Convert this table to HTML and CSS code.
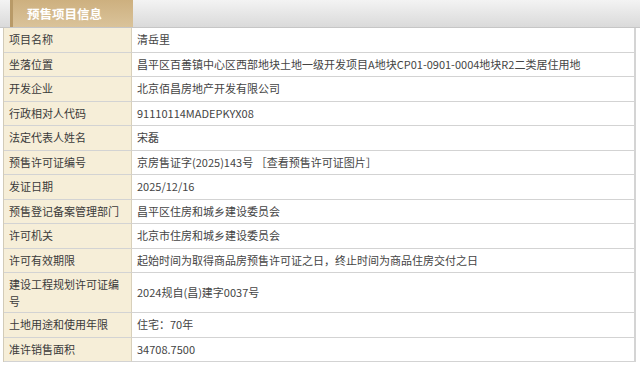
FILE: index.html
```html
<!DOCTYPE html>
<html lang="zh-CN">
<head>
<meta charset="utf-8">
<link rel="stylesheet" href="styles.css">
</head>
<body>
<div class="panel">
  <div class="tabbar">
    <div class="tab">预售项目信息</div>
  </div>
  <div class="info">
    <div class="label">项目名称</div><div class="value">清岳里</div>
    <div class="label">坐落位置</div><div class="value">昌平区百善镇中心区西部地块土地一级开发项目A地块CP01-0901-0004地块R2二类居住用地</div>
    <div class="label">开发企业</div><div class="value">北京佰昌房地产开发有限公司</div>
    <div class="label">行政相对人代码</div><div class="value">91110114MADEPKYX08</div>
    <div class="label">法定代表人姓名</div><div class="value">宋磊</div>
    <div class="label">预售许可证编号</div><div class="value">京房售证字(2025)143号 ［查看预售许可证图片］</div>
    <div class="label">发证日期</div><div class="value">2025/12/16</div>
    <div class="label">预售登记备案管理部门</div><div class="value">昌平区住房和城乡建设委员会</div>
    <div class="label">许可机关</div><div class="value">北京市住房和城乡建设委员会</div>
    <div class="label">许可有效期限</div><div class="value">起始时间为取得商品房预售许可证之日，终止时间为商品住房交付之日</div>
    <div class="label tall">建设工程规划许可证编号</div><div class="value tall">2024规自(昌)建字0037号</div>
    <div class="label">土地用途和使用年限</div><div class="value">住宅：70年</div>
    <div class="label">准许销售面积</div><div class="value">34708.7500</div>
  </div>
</div>
</body>
</html>
```

FILE: styles.css
```css
html, body {
  margin: 0;
  padding: 0;
  background: #ffffff;
}
body {
  font-family: "Noto Sans CJK SC", "Noto Sans", sans-serif;
  font-size: 11px;
  color: #3a3a3a;
  width: 640px;
  height: 365px;
  overflow: hidden;
}
.panel {
  width: 640px;
}
.tabbar {
  height: 27px;
  border-bottom: 1px solid #c6c6c6;
  background: linear-gradient(#f3f3f3, #dadada);
  display: flex;
  padding-left: 10px;
}
.tab {
  width: 123px;
  height: 27px;
  box-sizing: border-box;
  padding-left: 14px;
  background: linear-gradient(#cdb07f, #dac39a);
  border-left: 3px solid #b89a68;
  color: #ffffff;
  font-weight: bold;
  font-size: 12.5px;
  line-height: 28px;
}
.info {
  margin-left: 3px;
  width: 633px;
  box-sizing: border-box;
  border-left: 1px solid #d2cbb8;
  border-right: 2px solid #d4d4d4;
  display: grid;
  grid-template-columns: 128px 1fr;
  grid-auto-rows: auto;
}
.label, .value {
  display: flex;
  align-items: center;
  min-height: 24.5px;
  border-bottom: 1px solid #d3d3d3;
  line-height: 17px;
  box-sizing: border-box;
}
.label {
  background: #f6eed8;
  padding: 0 6px 0 5px;
  border-right: 1px solid #d8d0bb;
  color: #3a3a3a;
}
.value {
  background: #ffffff;
  padding-left: 5px;
  white-space: nowrap;
  color: #444444;
}
.tall {
  padding-top: 2.5px;
  padding-bottom: 2.5px;
}
.label.tall {
  word-break: break-all;
}
```
